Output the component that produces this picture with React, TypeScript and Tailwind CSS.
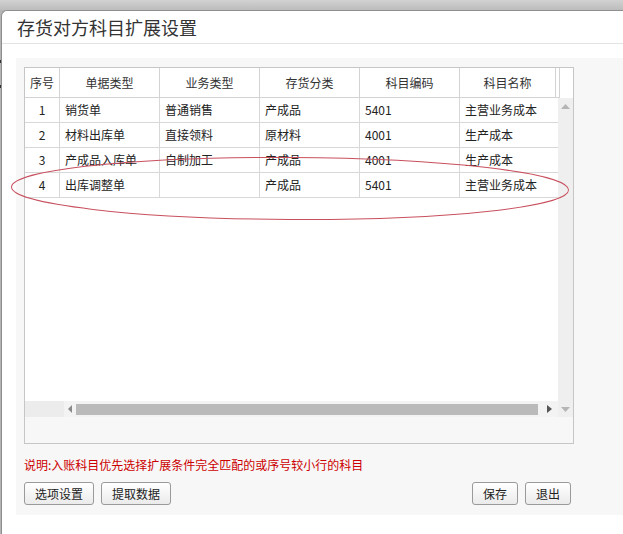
import React from "react";

const cols = [
  { w: "w-[35px]", label: "序号" },
  { w: "w-[100px]", label: "单据类型" },
  { w: "w-[100px]", label: "业务类型" },
  { w: "w-[100px]", label: "存货分类" },
  { w: "w-[100px]", label: "科目编码" },
  { w: "w-[96px]", label: "科目名称" },
];

const rows = [
  ["1", "销货单", "普通销售", "产成品", "5401", "主营业务成本"],
  ["2", "材料出库单", "直接领料", "原材料", "4001", "生产成本"],
  ["3", "产成品入库单", "自制加工", "产成品", "4001", "生产成本"],
  ["4", "出库调整单", "", "产成品", "5401", "主营业务成本"],
];

const bodyW = ["w-[35px]", "w-[100px]", "w-[100px]", "w-[100px]", "w-[100px]", "w-[98px]"];

function Btn({ label, w }: { label: string; w: string }) {
  return (
    <button
      className={`${w} h-[23px] rounded-[3px] border border-[#9a9a9a] bg-gradient-to-b from-white to-[#ebebeb] text-[12px] leading-[21px] text-[#222] text-center`}
    >
      {label}
    </button>
  );
}

export default function App() {
  return (
    <div
      className="relative w-[623px] h-[534px] overflow-hidden bg-[#b4b4b4] flex flex-col"
      style={{ fontFamily: '"Noto Sans CJK SC", "Noto Sans", sans-serif' }}
    >
      <div className="h-[10px] shrink-0 bg-gradient-to-b from-[#d2d2d2] to-[#bcbcbc]" />
      <div className="flex flex-1 min-h-0">
        <div className="w-[1px] shrink-0 flex flex-col">
          <div className="h-[50px]" />
          <div className="h-[3px] bg-[#333]" />
          <div className="h-[22px]" />
          <div className="h-[3px] bg-[#333]" />
        </div>
        <div className="flex-1 flex flex-col bg-white rounded-tl-[6px] border-t border-l border-[#8e8e8e]">
          <div className="h-[33px] shrink-0 border-b border-[#e3e3e3] pl-[15px] flex items-center">
            <span className="text-[18px] leading-[22px] text-[#333]">存货对方科目扩展设置</span>
          </div>
          <div className="h-[14px] shrink-0" />
          <div className="ml-[14px] h-[457px] shrink-0 bg-[#f7f7f7] pt-[9px] pl-[8px] flex flex-col">
            <div className="w-[550px] h-[377px] border border-[#c6c6c6] bg-white flex flex-col">
              {/* header */}
              <div className="flex h-[30px] shrink-0">
                {cols.map((c) => (
                  <div
                    key={c.label}
                    className={`${c.w} h-[30px] border-r border-b border-[#d3d3d3] flex items-center justify-center text-[12px] text-[#333]`}
                  >
                    {c.label}
                  </div>
                ))}
                <div className="w-[4px] h-[30px] border-r border-b border-[#d3d3d3]" />
                <div className="w-[13px] h-[30px]" />
              </div>
              {/* body */}
              <div className="flex h-[319px] shrink-0">
                <div className="w-[533px] flex flex-col">
                  {rows.map((r, i) => (
                    <div key={i} className="flex h-[25px] shrink-0">
                      {r.map((v, j) => (
                        <div
                          key={j}
                          className={`${bodyW[j]} h-[25px] border-b border-[#d8d8d8] ${
                            j < 5 ? "border-r" : ""
                          } flex items-center text-[12px] text-[#222] ${
                            j === 0 ? "justify-center" : "pl-[5px]"
                          }`}
                        >
                          {v}
                        </div>
                      ))}
                    </div>
                  ))}
                  <div className="flex-1" />
                  {/* horizontal scrollbar */}
                  <div className="h-[16px] shrink-0 flex bg-[#f3f3f3]">
                    <div className="w-[39px] bg-[#ececec]" />
                    <div className="w-[12px] flex items-center justify-center">
                      <svg width="5" height="8" viewBox="0 0 5 8">
                        <path d="M4 0 L0 4 L4 8 Z" fill="#8a8a8a" />
                      </svg>
                    </div>
                    <div className="w-[462px] flex items-center">
                      <div className="w-full h-[11px] bg-[#bababa]" />
                    </div>
                    <div className="flex-1 flex items-center justify-center pl-[2px]">
                      <svg width="5" height="8" viewBox="0 0 5 8">
                        <path d="M0 0 L5 4 L0 8 Z" fill="#555" />
                      </svg>
                    </div>
                  </div>
                </div>
                {/* vertical scrollbar */}
                <div className="w-[15px] bg-[#efefef] flex flex-col items-center">
                  <div className="h-[16px] flex items-center justify-center">
                    <svg width="9" height="5" viewBox="0 0 9 5">
                      <path d="M0 5 L4.5 0 L9 5 Z" fill="#b5b5b5" />
                    </svg>
                  </div>
                  <div className="flex-1" />
                  <div className="h-[16px] flex items-center justify-center">
                    <svg width="9" height="5" viewBox="0 0 9 5">
                      <path d="M0 0 L4.5 5 L9 0 Z" fill="#b5b5b5" />
                    </svg>
                  </div>
                </div>
              </div>
              <div className="flex-1 bg-[#f7f7f7]" />
            </div>
            <div className="mt-[13px] h-[16px] leading-[16px] text-[12px] text-[#cc0000]">
              说明:入账科目优先选择扩展条件完全匹配的或序号较小行的科目
            </div>
            <div className="mt-[9px] w-[550px] flex justify-between">
              <div className="flex gap-[7px]">
                <Btn label="选项设置" w="w-[70px]" />
                <Btn label="提取数据" w="w-[70px]" />
              </div>
              <div className="flex gap-[7px] mr-[3px]">
                <Btn label="保存" w="w-[46px]" />
                <Btn label="退出" w="w-[46px]" />
              </div>
            </div>
          </div>
          <div className="flex-1" />
        </div>
      </div>
      <svg
        className="absolute left-0 top-0 pointer-events-none"
        width="623"
        height="534"
        viewBox="0 0 623 534"
      >
        <ellipse
          cx="290"
          cy="188.5"
          rx="278.5"
          ry="31"
          fill="none"
          stroke="#c8505e"
          strokeWidth="1"
          transform="rotate(0.3 290 188.5)"
        />
      </svg>
    </div>
  );
}
